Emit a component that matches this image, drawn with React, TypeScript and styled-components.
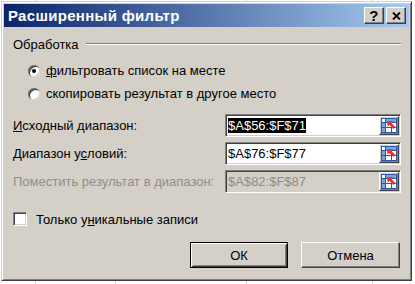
import React from 'react';
import styled, { createGlobalStyle, css } from 'styled-components';

const face = '#d4d0c8';

const GlobalStyle = createGlobalStyle`
  html, body {
    margin: 0;
    padding: 0;
  }
  body {
    width: 415px;
    height: 284px;
    overflow: hidden;
    background-color: #fff;
    background-image:
      linear-gradient(#d0d0d0, #d0d0d0),
      linear-gradient(#d0d0d0, #d0d0d0),
      linear-gradient(#d0d0d0, #d0d0d0),
      linear-gradient(#d0d0d0, #d0d0d0);
    background-size: 1px 100%;
    background-position: 35px 0, 115px 0, 246px 0, 372px 0;
    background-repeat: no-repeat;
    font-family: 'Liberation Sans', Arial, sans-serif;
    font-size: 13px;
    color: #000;
  }
`;

const raised = css`
  border: 1px solid;
  border-color: #fff #404040 #404040 #fff;
  box-shadow: inset -1px -1px #808080, inset 1px 1px ${face};
`;

const sunken = css`
  border: 1px solid;
  border-color: #808080 #fff #fff #808080;
  box-shadow: inset 1px 1px #404040, inset -1px -1px ${face};
`;

const Desktop = styled.div`
  padding: 1px 0 0 1px;
`;

const Window = styled.div`
  box-sizing: border-box;
  width: 411px;
  height: 280px;
  padding: 2px;
  background: ${face};
  border: 1px solid;
  border-color: ${face} #404040 #404040 ${face};
  box-shadow: inset 1px 1px #fff, inset -1px -1px #808080;
  display: flex;
  flex-direction: column;
`;

const TitleBar = styled.div`
  height: 23px;
  display: flex;
  align-items: center;
  padding: 0 3px 0 4px;
  background: linear-gradient(to right, #0a246a, #a6caf0);
  color: #fff;
  font-weight: bold;
  font-size: 15px;
  letter-spacing: 0.3px;
`;

const Title = styled.span`
  flex: 1;
`;

const CaptionButtons = styled.div`
  display: flex;
  gap: 2px;
`;

const CaptionButton = styled.div`
  ${raised};
  box-sizing: border-box;
  width: 20px;
  height: 17px;
  background: ${face};
  color: #000;
  display: flex;
  align-items: center;
  justify-content: center;
  font-size: 15px;
  font-weight: bold;
  line-height: 1;
`;

const Body = styled.div`
  padding: 0 8px 0 9px;
  display: flex;
  flex-direction: column;
`;

const GroupHeader = styled.div`
  margin-top: 9px;
  height: 16px;
  display: flex;
  align-items: center;
  gap: 7px;
`;

const GroupLine = styled.div`
  flex: 1;
  border-top: 1px solid #808080;
  border-bottom: 1px solid #fff;
`;

const RadioList = styled.div`
  margin-top: 7px;
  padding-left: 15px;
  display: flex;
  flex-direction: column;
`;

const OptionRow = styled.label`
  height: 23px;
  display: flex;
  align-items: center;
  gap: 6px;
`;

const RadioCircle = styled.span<{ $checked?: boolean }>`
  position: relative;
  width: 12px;
  height: 12px;
  border-radius: 50%;
  background: #fff;
  box-shadow: inset 1px 1px #808080, inset 2px 2px #404040, inset -1px -1px ${face};
  &::after {
    content: '';
    display: ${({ $checked }) => ($checked ? 'block' : 'none')};
    position: absolute;
    left: 4px;
    top: 4px;
    width: 4px;
    height: 4px;
    border-radius: 50%;
    background: #000;
  }
`;

const Key = styled.span`
  text-decoration: underline;
`;

const Fields = styled.div`
  margin-top: 9px;
  display: grid;
  grid-template-columns: 212px 176px;
  grid-auto-rows: 23px;
  row-gap: 5px;
  align-items: center;
`;

const FieldLabel = styled.span<{ $disabled?: boolean }>`
  color: ${({ $disabled }) => ($disabled ? '#8d8d8d' : '#000')};
`;

const RefEdit = styled.div<{ $disabled?: boolean }>`
  ${sunken};
  box-sizing: border-box;
  height: 23px;
  padding: 1px;
  display: flex;
  align-items: center;
  background: ${({ $disabled }) => ($disabled ? face : '#fff')};
  color: ${({ $disabled }) => ($disabled ? '#8d8d8d' : '#000')};
`;

const RefText = styled.span`
  flex: 1;
  padding-left: 1px;
  font-size: 13px;
  line-height: 15px;
`;

const Selected = styled.span`
  background: #000;
  color: #fff;
`;

const RefButton = styled.div`
  ${raised};
  box-sizing: border-box;
  width: 20px;
  height: 19px;
  background: ${face};
  display: flex;
  align-items: center;
  justify-content: center;
`;

const CheckRow = styled.label`
  margin-top: 17px;
  height: 18px;
  display: flex;
  align-items: center;
  gap: 9px;
`;

const CheckBox = styled.span`
  ${sunken};
  box-sizing: border-box;
  width: 14px;
  height: 14px;
  background: #fff;
`;

const ButtonRow = styled.div`
  margin-top: 14px;
  padding-right: 1px;
  display: flex;
  justify-content: flex-end;
  gap: 13px;
`;

const Button = styled.div<{ $default?: boolean }>`
  box-sizing: border-box;
  width: ${({ $default }) => ($default ? 98 : 99)}px;
  height: 26px;
  display: flex;
  align-items: center;
  justify-content: center;
  background: ${face};
  ${({ $default }) =>
    $default
      ? css`
          border: 1px solid #000;
          box-shadow: inset 1px 1px #fff, inset -1px -1px #404040, inset 2px 2px ${face},
            inset -2px -2px #808080;
        `
      : raised};
`;

const CloseGlyph = () => (
  <svg width="9" height="8" viewBox="0 0 9 8">
    <path d="M1 0.5 L8 7.5 M8 0.5 L1 7.5" stroke="#000" strokeWidth="1.8" />
  </svg>
);

// small worksheet grid with the red "collapse" arrow
const RefIcon = () => (
  <svg width="16" height="15" viewBox="0 0 16 15">
    <rect x="0" y="0" width="16" height="15" fill="#2b57a8" />
    <rect x="1" y="1" width="3" height="3" fill="#fff" />
    <rect x="5" y="1" width="10" height="3" fill="#7fa2e0" />
    <rect x="1" y="5" width="3" height="4" fill="#7fa2e0" />
    <rect x="1" y="10" width="3" height="4" fill="#7fa2e0" />
    <rect x="5" y="5" width="5" height="4" fill="#fff" />
    <rect x="11" y="5" width="4" height="4" fill="#fff" />
    <rect x="5" y="10" width="5" height="4" fill="#fff" />
    <rect x="11" y="10" width="4" height="4" fill="#fff" />
    <path d="M6 3 L12 3 L10.5 5 L14.5 9 L12.5 11 L8.5 7 L6.5 8.5 Z" fill="#e8372a" />
  </svg>
);

type RangeProps = { value: string; selected?: boolean; disabled?: boolean };

const RangeInput = ({ value, selected, disabled }: RangeProps) => (
  <RefEdit $disabled={disabled}>
    <RefText>{selected ? <Selected>{value}</Selected> : value}</RefText>
    <RefButton>
      <RefIcon />
    </RefButton>
  </RefEdit>
);

export default function App() {
  return (
    <Desktop>
      <GlobalStyle />
      <Window>
        <TitleBar>
          <Title>Расширенный фильтр</Title>
          <CaptionButtons>
            <CaptionButton>?</CaptionButton>
            <CaptionButton>
              <CloseGlyph />
            </CaptionButton>
          </CaptionButtons>
        </TitleBar>
        <Body>
          <GroupHeader>
            <span>Обработка</span>
            <GroupLine />
          </GroupHeader>
          <RadioList>
            <OptionRow>
              <RadioCircle $checked />
              <span>
                <Key>ф</Key>ильтровать список на месте
              </span>
            </OptionRow>
            <OptionRow>
              <RadioCircle />
              <span>
                скопировать результат в <Key>д</Key>ругое место
              </span>
            </OptionRow>
          </RadioList>
          <Fields>
            <FieldLabel>
              <Key>И</Key>сходный диапазон:
            </FieldLabel>
            <RangeInput value="$A$56:$F$71" selected />
            <FieldLabel>
              Диапазон у<Key>с</Key>ловий:
            </FieldLabel>
            <RangeInput value="$A$76:$F$77" />
            <FieldLabel $disabled>Поместить результат в диапазон:</FieldLabel>
            <RangeInput value="$A$82:$F$87" disabled />
          </Fields>
          <CheckRow>
            <CheckBox />
            <span>
              Только у<Key>н</Key>икальные записи
            </span>
          </CheckRow>
          <ButtonRow>
            <Button $default>ОК</Button>
            <Button>Отмена</Button>
          </ButtonRow>
        </Body>
      </Window>
    </Desktop>
  );
}
